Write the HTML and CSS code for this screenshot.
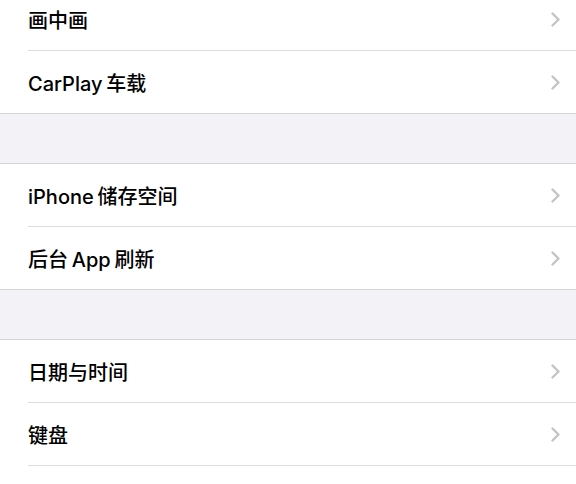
FILE: index.html
```html
<!DOCTYPE html>
<html lang="zh-CN">
<head>
<meta charset="utf-8">
<link rel="stylesheet" href="styles.css">
</head>
<body>
<div class="page">
  <div class="group first">
    <div class="row"><span class="label">画中画</span><svg class="chev" viewBox="0 0 9 15"><path d="M1.5 1.5 L7.5 7.5 L1.5 13.5"/></svg></div>
    <div class="row"><span class="label">CarPlay 车载</span><svg class="chev" viewBox="0 0 9 15"><path d="M1.5 1.5 L7.5 7.5 L1.5 13.5"/></svg></div>
  </div>
  <div class="gap"></div>
  <div class="group">
    <div class="row"><span class="label">iPhone 储存空间</span><svg class="chev" viewBox="0 0 9 15"><path d="M1.5 1.5 L7.5 7.5 L1.5 13.5"/></svg></div>
    <div class="row"><span class="label">后台 App 刷新</span><svg class="chev" viewBox="0 0 9 15"><path d="M1.5 1.5 L7.5 7.5 L1.5 13.5"/></svg></div>
  </div>
  <div class="gap"></div>
  <div class="group">
    <div class="row"><span class="label">日期与时间</span><svg class="chev" viewBox="0 0 9 15"><path d="M1.5 1.5 L7.5 7.5 L1.5 13.5"/></svg></div>
    <div class="row"><span class="label">键盘</span><svg class="chev" viewBox="0 0 9 15"><path d="M1.5 1.5 L7.5 7.5 L1.5 13.5"/></svg></div>
    <div class="row"><span class="label">字体</span><svg class="chev" viewBox="0 0 9 15"><path d="M1.5 1.5 L7.5 7.5 L1.5 13.5"/></svg></div>
  </div>
</div>
</body>
</html>
```
FILE: styles.css
```css
html, body {
  margin: 0;
  padding: 0;
  background: #f2f2f7;
  overflow: hidden;
}
.page {
  margin-top: -12px;
  font-family: Inter, "Noto Sans CJK SC", sans-serif;
}
.group {
  background: #ffffff;
  border-top: 1px solid #d4d4d8;
  border-bottom: 1px solid #d4d4d8;
}
.group.first {
  border-top: none;
}
.row {
  height: 62px;
  margin-left: 28px;
  padding-right: 16px;
  display: flex;
  align-items: center;
  justify-content: space-between;
  border-bottom: 1px solid #dcdce0;
}
.row:last-child {
  border-bottom: none;
}
.label {
  font-size: 20px;
  font-weight: 500;
  color: #000;
  padding-top: 1px;
  word-spacing: -1.5px;
}
.chev {
  width: 9px;
  height: 15px;
  fill: none;
  stroke: #c4c4c8;
  stroke-width: 2.4;
  stroke-linecap: round;
  stroke-linejoin: round;
}
.gap {
  height: 49px;
}
```
